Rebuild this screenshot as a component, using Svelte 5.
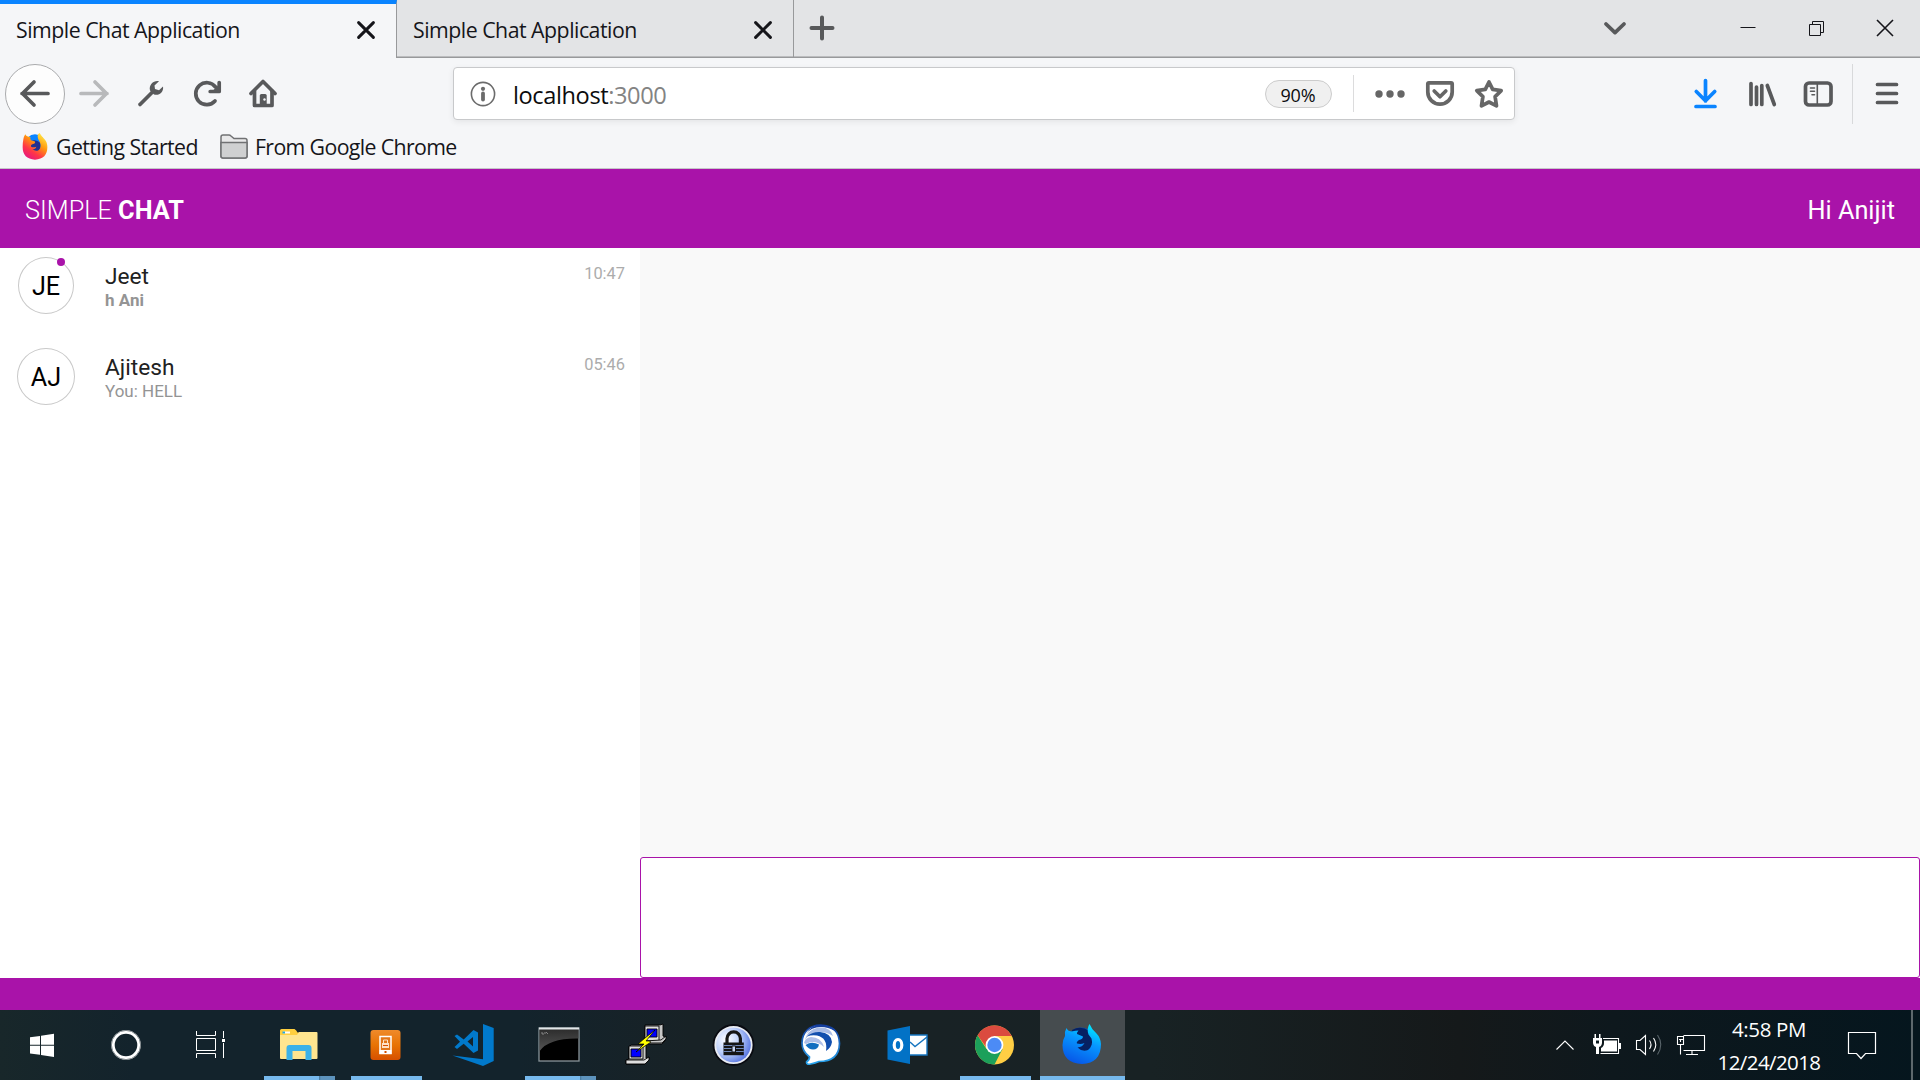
<script>
  const tabs = [
    { title: 'Simple Chat Application', active: true },
    { title: 'Simple Chat Application', active: false }
  ];

  const chats = [
    { initials: 'JE', name: 'Jeet', preview: 'h Ani', time: '10:47', unread: true },
    { initials: 'AJ', name: 'Ajitesh', preview: 'You: HELL', time: '05:46', unread: false }
  ];

  const apps = [
    { id: 'explorer', state: 'stacked' },
    { id: 'phone', state: 'open' },
    { id: 'code', state: '' },
    { id: 'cmd', state: 'stacked' },
    { id: 'putty', state: '' },
    { id: 'lock', state: '' },
    { id: 'lync', state: '' },
    { id: 'outlook', state: '' },
    { id: 'chrome', state: 'open' },
    { id: 'firefox', state: 'focused' }
  ];
</script>

<div class="screen">
  <div class="tabstrip">
    {#each tabs as tab}
      <div class="tab" class:active={tab.active}>
        <span class="tab-title">{tab.title}</span>
        <svg class="tab-close" viewBox="-10 -10 20 20"><path d="M-7.4-7.4 7.4 7.4M7.4-7.4-7.4 7.4" /></svg>
      </div>
    {/each}
    <svg class="plus" viewBox="-14 -14 28 28"><path d="M-10.5 0h21M0-10.5v21" /></svg>
    <div class="window-controls">
      <svg class="chev" viewBox="-14 -14 28 28"><path d="M-9-4 0 4.6 9-4" /></svg>
      <svg class="wc min" viewBox="0 0 28 28"><path d="M6.5 13.5h15" /></svg>
      <svg class="wc" viewBox="0 0 28 28"><path d="M6.500 10.500h11v11h-11zM9.500 10.500v-3h11v11h-3" /></svg>
      <svg class="wc x" viewBox="0 0 28 28"><path d="M6 6 22 22M22 6 6 22" /></svg>
    </div>
  </div>

  <div class="navbar">
    <div class="back">
      <svg class="ic" viewBox="-16 -16 32 32"><path d="M13-.5h-26M-1-12-12.500-.5-1 11" /></svg>
    </div>
    <div class="navbtn dim">
      <svg class="ic" viewBox="-16 -16 32 32"><path d="M-13-.5h26M1-12 12.500-.5 1 11" /></svg>
    </div>
    <div class="navbtn">
      <svg class="ic" viewBox="-16 -16 32 32">
        <path d="M-11 10.500 2-2.500" />
        <path class="fill" d="M8-12.800C3-14-2.500-9.500-1-3.500l4 4C8 2 13-2 12-7.500L8-3.800 4-5 3.500-8.500Z" />
      </svg>
    </div>
    <div class="navbtn">
      <svg class="ic" viewBox="-15 -16 32 32">
        <path d="M8 7A11 11 0 1 1 8.500-7" />
        <path d="M12.200-11.500v9h-9" />
        <path class="fill" d="M12.500-10v8h-8z" />
      </svg>
    </div>
    <div class="navbtn">
      <svg class="ic" viewBox="-14.500 -16 32 32">
        <path d="M-12.500-.5-.5-12.500 11.500-.5" />
        <path d="M-9-3v14.500H8.500V-3" />
        <path class="fill" d="M-3.700 11V1.500Q-3.700 0-2.200 0h3.900Q3.200 0 3.200 1.500V11z" />
        <circle class="knob" cx="1" cy="5.500" r="1.200" />
      </svg>
    </div>

    <div class="urlbar">
      <svg class="info" viewBox="-13 -13 26 26">
        <circle r="11.600" />
        <path d="M0-.5v6" stroke-width="3.800" stroke-linecap="round" />
        <circle class="dot" cy="-5.200" r="2.100" />
      </svg>
      <span class="url"><b>localhost</b>:3000</span>
      <span class="zoom">90%</span>
      <span class="url-sep"></span>
      <svg class="ic act" viewBox="-16 -16 32 32">
        <g class="dots"><circle cx="-11" r="3.700" /><circle r="3.700" /><circle cx="11" r="3.700" /></g>
      </svg>
      <svg class="ic act" viewBox="-16 -16 32 32">
        <path d="M-11-11.200h22q1.200 0 1.200 1.200v8A12.200 12.200 0 0 1-12.200-2v-8q0-1.200 1.200-1.200zM-5.800-3 0 2.800 5.800-3" />
      </svg>
      <svg class="ic act" viewBox="-16 -16 32 32">
        <path d="M0-12 3.700-4.600 12.200-3.400 6.100 2.600 7.500 11.800 0 8-7.500 11.800-6.100 2.600-12.200-3.400-3.700-4.600Z" />
      </svg>
    </div>

    <div class="navright">
      <div class="navbtn blue">
        <svg class="ic" viewBox="-16.500 -16 32 32"><path d="M0-13.500V7M-9.200-2.500 0 6.700 9.200-2.500M-9.500 12.500h19" /></svg>
      </div>
      <div class="navbtn">
        <svg class="ic" viewBox="-16.500 -16 32 32"><path d="M-11.500-10.500v21M-6-7v17.500M-.7-8.500v19M4.800-8.500l7 19" /></svg>
      </div>
      <div class="navbtn">
        <svg class="ic" viewBox="-16 -16 32 32">
          <rect x="-12.500" y="-11" width="25.500" height="22" rx="3.500" />
          <path d="M-.7-10v20M-7.500-6h4M-7.500-2.700h4M-6 .8h2.500" class="thin" />
        </svg>
      </div>
      <div class="menu">
        <svg class="ic" viewBox="-16 -16 32 32"><path d="M-9.500-9.500h19M-9.500-.5h19M-9.500 8.500h19" /></svg>
      </div>
    </div>
  </div>

  <div class="bookmarks">
    <svg class="fx" viewBox="0 0 40 42">
      <defs>
        <linearGradient id="fxa" x1=".85" y1="0" x2=".2" y2="1">
          <stop offset="0" stop-color="#fff44f" /><stop offset=".4" stop-color="#ff980e" />
          <stop offset=".7" stop-color="#ff3647" /><stop offset="1" stop-color="#e31587" />
        </linearGradient>
      </defs>
      <circle cx="20" cy="18" r="15" fill="#0a84ff" />
      <path d="M14 13q8-3 14 3 2 7-2 13-8 4-13-3z" fill="#20308f" />
      <path fill="url(#fxa)" d="M5 3q2 4 8 4-1 3 1 5l6 2q1 3-3 4-4 1-3 4 4 2 8 0-1 4-6 4 5 4 10 1 5-5 1-13-3-4-3-8 0-4 3-5 3 5 8 10 4 4 4 12 0 18-19 19Q1 41 1 23 1 9 5 3z" />
    </svg>
    <span class="bm first">Getting Started</span>
    <svg class="folder" viewBox="0 0 28 25">
      <path d="M1 3Q1 1 3 1h6q1 0 2 1l3 2.500h11q2 0 2 2V22q0 2-2 2H3q-2 0-2-2z" fill="#e8e8e9" />
      <path d="M1 8.500h26V22q0 2-2 2H3q-2 0-2-2z" fill="#cfd0d1" />
    </svg>
    <span class="bm second">From Google Chrome</span>
  </div>

  <header class="appbar">
    <span class="brand">SIMPLE <b>CHAT</b></span>
    <span class="hello">Hi Anijit</span>
  </header>

  <main class="chat">
    <aside>
      {#each chats as chat}
        <div class="row">
          <div class="avatar" class:wide={!chat.unread}>
            {chat.initials}
            {#if chat.unread}<i class="unread"></i>{/if}
          </div>
          <div class="who">
            <div class="name">{chat.name}</div>
            <div class="preview" class:bold={chat.unread}>{chat.preview}</div>
          </div>
          <time>{chat.time}</time>
        </div>
      {/each}
    </aside>
    <section>
      <div class="messages"></div>
      <textarea class="composer"></textarea>
    </section>
  </main>
  <footer class="appfoot"></footer>

  <div class="taskbar">
    <div class="sys">
      <svg viewBox="0 0 44 44"><path fill="#fff" d="M10 14.300 20 12.900v8.900H10zM21 12.700 34 10.700v11.100H21zM10 22.800h10v9l-10-1.400zM21 22.800h13V34l-13-1.900z" /></svg>
    </div>
    <div class="sys">
      <svg viewBox="0 0 44 44"><circle cx="22" cy="22" r="13" fill="none" stroke="#fff" stroke-width="3.400" /><circle cx="22" cy="22" r="14.600" fill="none" stroke="#81898d" stroke-width="1" /></svg>
    </div>
    <div class="sys">
      <svg viewBox="0 0 44 44">
        <path fill="none" stroke="#fff" d="M8.500 8v4.500h19V8M8.500 15.500h19v12h-19zM8.500 35v-4.500h19V35M35.500 8v7M35.500 20v15" />
        <path fill="#fff" d="M34 16h3v3h-3z" />
      </svg>
    </div>
    <div class="apps">
      {#each apps as app}
        <div class="app {app.state}">
          <svg viewBox="0 0 44 44">
            {#if app.id === 'explorer'}
              <path fill="#ffcf3f" d="M3 7.500Q3 6 4.500 6h13q2 1 3 3.500H40v7H3z" />
              <path fill="#ffe58f" d="M3 12h17l2-3h17.500q1 0 1 1v25q0 1-1 1H4q-1 0-1-1z" />
              <path fill="#fff" d="M6 8.500h7v2H6z" /><path fill="#24a7df" d="M5.500 8.500H8v2H5.500z" />
              <path fill="#3bb1e8" d="M9.500 37V25q0-3 3-3h19q3 0 3 3v12h-6v-9h-13v9z" />
            {:else if app.id === 'phone'}
              <defs><linearGradient id="org" x2="0" y2="1"><stop stop-color="#ef8a2b" /><stop offset=".5" stop-color="#e87304" /><stop offset="1" stop-color="#d65000" /></linearGradient></defs>
              <rect x="6.500" y="7" width="30" height="30" rx="3" fill="url(#org)" />
              <rect x="16" y="13.500" width="11" height="17" fill="#e27518" stroke="#fff" stroke-width="1.500" />
              <path fill="#fff" d="M15.500 27h12v4h-12z" /><path fill="#ffe1c4" d="M18 20h7v5h-7z" />
              <path fill="none" stroke="#ffe1c4" d="M19.500 20v-3h4v3" /><path fill="#d65000" d="M20.500 28h2v2h-2zM19 22h5v1h-5z" />
            {:else if app.id === 'code'}
              <path fill="#0179cb" d="M32 1l10.700 4v33L32 43 1.500 32.500l30.500 3.700z" />
              <path fill="#0179cb" fill-rule="evenodd" d="M22.500 7 27 9.500v18L22.500 30l-9.800-9.300L6 26l-2.500-2 5.500-5.300L3.500 13 6 11.500l6.700 5zM22 14l-5.500 4.600 5.500 4.800z" />
            {:else if app.id === 'cmd'}
              <defs><linearGradient id="cmdg" x2="0" y2="1"><stop stop-color="#2c2c2c" /><stop offset="1" stop-color="#555" /></linearGradient></defs>
              <rect x="1" y="5" width="40" height="33" fill="#000" stroke="#89949a" stroke-width="1.300" />
              <path fill="url(#cmdg)" d="M1.700 6h38.600v9.500Q11 15 1.700 28z" />
              <path fill="#e2e6e8" d="M1 4.500h40V6.500H1z" />
              <path fill="none" stroke="#999" stroke-width=".8" d="M4 9v2h2M7 9v2M8 9l2 2" />
            {:else if app.id === 'putty'}
              <g stroke="#000" stroke-width=".9">
                <path fill="#c7c7c7" d="M20 2h15l3-1v12l2 1v4l-3 3H19z" /><path fill="#dedede" d="M20 3h14v15H20z" /><path fill="#00f" d="M22 6h10v8H22z" />
                <path fill="#c7c7c7" d="m19 18 17-1 5-4v3l-4 4H19z" />
                <path fill="#c7c7c7" d="M4 24l2-2h15v13l3-1v3l-4 4H1v-4l3-1z" /><path fill="#dedede" d="M4 23h14v13H4z" /><path fill="#00f" d="M6 26h10v8H6z" />
                <path fill="#dedede" d="M1 37h18l5-3v3l-4 4H1z" />
                <path fill="#ff0" stroke-width=".7" d="M30 7 20 15l-7 6h6l-8 8 15-10-2-1h-3z" />
              </g>
            {:else if app.id === 'lock'}
              <defs><radialGradient id="kp" cx=".3" cy=".35" r=".8"><stop stop-color="#fff" /><stop offset=".5" stop-color="#b9cdfa" /><stop offset="1" stop-color="#4767dc" /></radialGradient></defs>
              <circle cx="21.500" cy="22" r="20" fill="#e8ebf2" stroke="#080a10" stroke-width="1.800" />
              <circle cx="21.500" cy="22" r="17.300" fill="url(#kp)" />
              <path fill="none" stroke="#151515" stroke-width="3.200" d="M15 20v-4.500a6.700 6.700 0 0 1 13.400 0V20" />
              <path fill="#151515" d="M11.500 19.500h20.300v12.700H11.500z" />
              <path stroke="#6f87b8" stroke-width="1" d="M11.500 22.500h20.300M11.500 25.500h20.300M11.500 28.500h20.300" />
              <path fill="#c8d6f5" stroke="#151515" d="M20 23h3.500v6H20z" />
            {:else if app.id === 'lync'}
              <defs><linearGradient id="lyr" x2="0" y2="1"><stop stop-color="#123a9c" /><stop offset="1" stop-color="#27a5ee" /></linearGradient></defs>
              <path fill="#fff" stroke="url(#lyr)" stroke-width="1.700" stroke-linejoin="round" d="M21.500 2C10 2 3 10 3 20q0 8 7.500 14Q10.500 37 7.500 39q0 3 4 2 5-1 8.500-2.500 20 0 20.500-18Q40 2.500 21.500 2z" />
              <path fill="#153f9f" d="M7 11Q12 2 22 2q9 .5 14 6-7-4-14-4Q12 4 7 11z" />
              <path fill="#a9bce6" d="M6 17Q9 5 22 4.500q10 0 12 8.500-6-4-13-4Q11 9 6 17z" />
              <path fill="#124fae" d="M8 13.500Q13 8.500 21 9q11 1 12 10-1 6-6 9Q29 15 18 12.500q-5-1-10 1z" />
              <path fill="#aebfe8" d="M5 20q1-5 7-6 10 0 13 10-9-8-18-3z" />
              <path fill="#136fc0" d="M6.500 22q6-4 13.500-.5-1 5-6 5-4 0-7.500-4.500z" />
            {:else if app.id === 'outlook'}
              <path fill="#fff" stroke="#1675c0" stroke-width="1.400" d="M22 12h19v20H22z" />
              <path fill="none" stroke="#1675c0" stroke-width="1.400" d="m24 19 5 4.500L41 14" />
              <path fill="#0272c6" d="M1.500 7.500 24 3v38L1.500 36.500z" />
              <ellipse cx="12" cy="22" rx="3.800" ry="5.500" fill="none" stroke="#fff" stroke-width="3.200" />
            {:else if app.id === 'chrome'}
              <circle cx="21.500" cy="22" r="19.500" fill="#ffce44" />
              <path fill="#1ca05a" d="M4.600 12.300A19.500 19.500 0 0 0 21.500 41.500L29.500 26l-16 0z" />
              <path fill="#db4b3f" d="M21.500 13h17.200A19.500 19.500 0 0 0 4.600 12.300l8.600 12z" />
              <circle cx="21.500" cy="22" r="8.900" fill="#fff" /><circle cx="21.500" cy="22" r="7.200" fill="#4c8bf5" />
            {:else}
              <defs><linearGradient id="fxd" x1=".8" y1="0" x2=".4" y2="1"><stop stop-color="#00f0ff" /><stop offset=".45" stop-color="#0797ff" /><stop offset="1" stop-color="#0758e8" /></linearGradient></defs>
              <circle cx="21" cy="18.500" r="14" fill="#0b4cae" />
              <path fill="#062062" d="M12 7q9-5 17 1l4 11-4 11-11 2-5-16z" />
              <path fill="url(#fxd)" d="M6.500 5q1 3 5 3.500 4-1 7-1-2 2-1.500 3.500l6 2.500q0 2.500-4 3.500-3 2-2 3.500 4 1 7.500-.5-2 4-7 4.500 5 5 10.500 2.500 5.500-4.500 3.500-11.500l-3-4q-2-6 1-10.500 2 5 7 9.500 4 4 4.500 10.500Q41 40 22 41 2.500 40 2.500 22q0-5 2.500-9-.5-5 1.500-8z" />
            {/if}
          </svg>
          <i class="bar"></i>
        </div>
      {/each}
    </div>

    <div class="tray">
      <svg class="t-caret" viewBox="0 0 20 30"><path d="M1.500 19.500 10 11l8.500 8.500" /></svg>
      <svg class="t-bat up" viewBox="0 0 30 30">
        <path d="M11 9.500h15.500v15H8.500" />
        <path class="w" d="M12 11.500h13v11H9v-3.500q3-1.500 3-5zM27 14h2v6h-2z" />
        <path class="w" d="M1 9h9v5q-.5 3.500-3 4v7H4v-7q-2.500-.5-3-4zM2.500 5H4v4.500H2.500zM7 5h1.500v4.500H7z" />
        <path class="cut" d="M4 11.500h3v3H4z" />
      </svg>
      <svg class="t-vol up" viewBox="0 0 30 30"><path d="M2.500 11.500H6l5.500-5v19l-5.500-5H2.500zM15.500 11.500q3 4 0 8.500M19.500 9q4.500 6.500 0 13.500" /><path class="faint" d="M23.500 6q6.500 9.500 0 19.500" /></svg>
      <svg class="t-net up" viewBox="0 0 30 30"><path d="M7.500 6.500h21v15H7.500M1.500 7.500h6v8h-6zM3 10.500h4M4.500 10v3M4.500 16v9.500M16 22v3M10 25.500h12" /></svg>
      <div class="clock"><span class="hm">4:58 PM</span><span class="date">12/24/2018</span></div>
      <svg class="t-act" viewBox="0 0 30 32"><path d="M1.500 3.500h27v21H18.500L14 29.500 9.500 24.500h-8z" /></svg>
      <span class="peek"></span>
    </div>
  </div>
</div>

<style>
  :global(body) { margin: 0; overflow: hidden; }
  .screen { width: 1920px; height: 1080px; display: flex; flex-direction: column; font-family: 'Open Sans', 'Noto Sans', sans-serif; background: #fff; }
  .screen * { box-sizing: border-box; }
  svg { display: block; flex: none; fill: none; }

  .tabstrip { height: 58px; display: flex; background: #e3e4e6; box-shadow: inset 0 -1px #98999b, inset 0 -2px #bbbcbe; }
  .tab { width: 397px; display: flex; align-items: center; justify-content: space-between; padding: 1px 20px 0 16px; border-right: 1px solid #98999b; color: #15151a; }
  .tab.active { background: #f5f6f8; border-top: 4px solid #0a84ff; padding-top: 0; padding-bottom: 3px; }
  .tab-title { font-size: 21.3px; letter-spacing: -.5px; white-space: nowrap; }
  .tab-close { width: 20px; height: 20px; stroke: #15151a; stroke-width: 3; stroke-linecap: round; }
  .plus { width: 28px; height: 28px; margin: 14px 0 0 14px; stroke: #58595b; stroke-width: 4; stroke-linecap: round; }
  .window-controls { margin-left: auto; display: flex; align-items: center; height: 56px; }
  .chev { width: 28px; height: 28px; margin-right: 105px; stroke: #58595b; stroke-width: 3.8; stroke-linecap: round; stroke-linejoin: round; }
  .wc { width: 28px; height: 28px; margin-right: 41px; stroke: #15151a; stroke-width: 1; }
  .wc.x { margin: 0 21px 0 -1px; stroke-width: 1.6; }

  .navbar { height: 70px; display: flex; align-items: center; padding-left: 5px; background: #f5f6f8; padding-top: 2px; }
  .ic { width: 32px; height: 32px; stroke: #58595b; stroke-width: 3.7; stroke-linecap: round; stroke-linejoin: round; }
  .ic .fill { fill: #58595b; stroke: none; }
  .ic .knob { fill: #f5f6f8; stroke: none; }
  .ic .thin { stroke-width: 1.6; }
  .back { width: 60px; height: 60px; border: 1px solid #aaabad; border-radius: 50%; background: #fdfdfd; display: grid; place-items: center; }
  .navbtn { width: 57px; display: grid; place-items: center; }
  .dim .ic { stroke: #b8b9bb; }
  .blue .ic { stroke: #0a84ff; }
  .urlbar { width: 1062px; height: 53px; margin: 0 0 1px 160px; display: flex; align-items: center; background: #fff; border: 1px solid #c8c9cb; border-radius: 4px; box-shadow: 0 2px 6px rgba(0, 0, 0, .07); padding-left: 16px; }
  .info { width: 26px; height: 26px; stroke: #6b6b6b; stroke-width: 1.6; }
  .info .dot { fill: #6b6b6b; stroke: none; }
  .url { flex: 1; margin-left: 17px; padding-top: 3px; font-size: 23.6px; letter-spacing: -.4px; color: #838383; }
  .url b { font-weight: 400; color: #0c0c0d; }
  .zoom { width: 67px; height: 28px; padding-right: 1px; border: 1px solid #ccc; border-radius: 14px; background: #f0f0f0; color: #0c0c0d; font-size: 18px; letter-spacing: -.1px; line-height: 29px; text-align: center; }
  .url-sep { width: 1px; height: 37px; margin: 0 20px 0 21px; background: #dcdcdd; }
  .act { stroke: #666; margin-right: 17.500px; }
  .act:last-child { margin-right: 9px; }
  .dots { fill: #666; stroke: none; }
  .navright { margin-left: 162px; flex: 1; display: flex; align-items: center; }
  .navright .navbtn { width: 56.500px; }
  .menu { margin-left: auto; width: 68px; height: 60px; border-left: 1px solid #d8d9db; display: grid; place-items: center; }

  .bookmarks { height: 41px; display: flex; align-items: center; padding: 0 0 4px 22px; background: #f5f6f8; border-bottom: 1px solid #c5c6c8; color: #15151a; }
  .fx { width: 26px; height: 28px; }
  .bm { padding-top: 1px; font-size: 21.3px; white-space: nowrap; }
  .first { width: 172px; padding-left: 8px; letter-spacing: -.58px; }
  .second { padding-left: 7px; letter-spacing: -.63px; }
  .folder { width: 28px; height: 25px; stroke: #707173; stroke-width: 1.5; }

  .appbar { height: 79px; display: flex; align-items: center; justify-content: space-between; padding: 3px 25px 0 25px; background: #a913a9; color: #fff; font-family: Roboto, sans-serif; font-size: 25.3px; }
  .brand { font-weight: 300; }
  .brand b { font-weight: 700; }

  .chat { height: 730px; display: flex; font-family: Roboto, sans-serif; }
  aside { width: 640px; background: #fff; }
  .row { height: 91px; display: flex; padding: 9px 15px 0 17px; }
  .avatar { position: relative; width: 56px; height: 57px; margin: 0 31px 0 1px; border: 1px solid #c9c9c9; border-radius: 50%; font-size: 25.2px; line-height: 58px; text-align: center; color: #000; }
  .avatar.wide { width: 58px; margin: 0 30px 0 0; }
  .unread { position: absolute; top: 0; right: 8px; width: 8px; height: 8px; border-radius: 50%; background: #a913a9; }
  .who { flex: 1; padding-top: 6px; }
  .name { font-size: 22.7px; line-height: 28px; color: #212121; }
  .preview { margin-top: -1px; font-size: 17px; line-height: 20px; color: #949494; }
  .preview.bold { font-weight: 700; }
  time { padding-top: 7px; font-size: 16.4px; line-height: 20px; color: #acacac; }
  section { width: 1280px; display: flex; flex-direction: column; }
  .messages { flex: 1; background: #f9f9f9; }
  .composer { height: 121px; width: 100%; resize: none; outline: 0; border: 1px solid #a913a9; border-radius: 3px; background: #fff; }
  .appfoot { height: 32px; background: #a913a9; }

  .taskbar { height: 70px; display: flex; background: linear-gradient(90deg, #18272a 0, #13232c 7%, #13232c 27%, #182226 36%, #182224 60%, #15191a 76%, #0e181d 84%, #05161e 100%); }
  .sys { width: 84px; display: grid; place-items: center; }
  .sys svg, .app svg { width: 44px; height: 44px; }
  .apps { display: flex; margin-left: 4px; }
  .app { width: 87px; position: relative; display: grid; place-items: center; padding-right: 1px; }
  .bar { display: none; position: absolute; left: 8px; right: 8px; bottom: 0; height: 4px; background: #76b9ed; }
  .open .bar, .stacked .bar, .focused .bar { display: block; }
  .stacked .bar { background: linear-gradient(90deg, #76b9ed 55px, #44779d 55px, #5d93bd 57px); }
  .focused { width: 85px; margin-left: 1px; background: #464c4f; }
  .focused .bar { left: 0; right: 0; }
  .tray { margin-left: auto; display: flex; align-items: center; color: #fff; }
  .tray svg { stroke: #fff; stroke-width: 1.1; height: 30px; }
  .tray .up { margin-bottom: 2px; }
  .tray .w { fill: #fff; stroke: none; }
  .tray .cut { fill: #0a181e; stroke: none; }
  .tray .faint { stroke: #59646a; }
  .t-caret { width: 20px; margin-right: 17px; }
  .t-bat { width: 30px; margin-right: 12px; }
  .t-vol { width: 30px; margin-right: 12px; }
  .t-net { width: 30px; margin-right: 10px; }
  .clock { width: 106px; height: 70px; display: flex; flex-direction: column; align-items: center; font-size: 20.5px; line-height: 33px; padding-top: 3px; white-space: nowrap; }
  .hm { letter-spacing: -.35px; }
  .date { letter-spacing: -.6px; }
  .tray .t-act { width: 30px; height: 32px; margin-left: 25px; stroke-width: 1.2; }
  .peek { width: 9px; height: 70px; margin-left: 34px; border-left: 2px solid #5d686d; }
</style>
